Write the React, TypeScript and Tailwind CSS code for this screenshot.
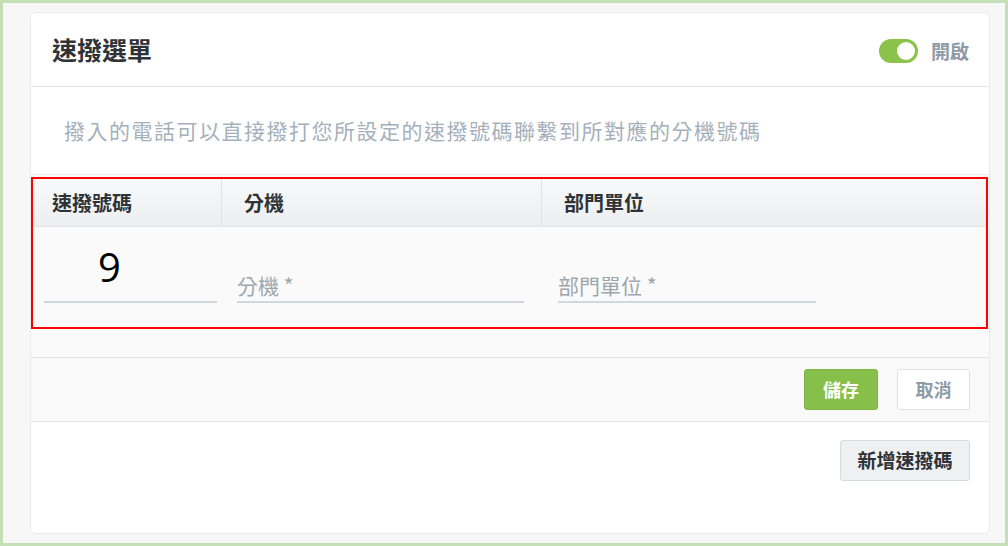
import React from "react";

const cjk = { fontFamily: '"Noto Sans CJK TC", "Noto Sans", sans-serif' };

export default function App() {
  return (
    <div
      className="w-[1008px] h-[546px] border-[3px] border-[#c6e0b5] bg-[#f7f7f7] pt-[9px] pl-[27px]"
      style={cjk}
    >
      <div className="w-[960px] h-[522px] rounded-[6px] border border-[#ebebeb] bg-white overflow-hidden flex flex-col">
        {/* Header */}
        <div className="h-[74px] shrink-0 border-b border-[#e3e3e3] flex items-center justify-between pl-[21px] pr-[20px]">
          <div className="text-[25px] font-bold text-[#2f3336] leading-none">速撥選單</div>
          <div className="flex items-center gap-[13px] pt-[2px]">
            <div className="w-[39px] h-[24px] rounded-full bg-[#8bc34a] flex items-center justify-end pr-[3px]">
              <div className="w-[18px] h-[18px] rounded-full bg-white" />
            </div>
            <div className="text-[19px] font-bold text-[#8d9ba7] leading-none">開啟</div>
          </div>
        </div>

        {/* Description */}
        <div className="h-[88px] shrink-0 border-b border-[#ececec] flex items-center pl-[33px]">
          <div className="text-[21px] tracking-[1.5px] text-[#a5b0ba] leading-none">
            撥入的電話可以直接撥打您所設定的速撥號碼聯繫到所對應的分機號碼
          </div>
        </div>

        {/* Table section */}
        <div className="h-[183px] shrink-0 bg-[#fafafa] border-b border-[#e2e2e2] pt-[2px]">
          <div className="h-[152px] mr-[1px] border-2 border-[#ff0000] flex flex-col">
            <div className="h-[48px] shrink-0 flex border-b border-[#e3e6e8] bg-gradient-to-b from-[#f8f9fa] to-[#eceef0]">
              <div className="w-[189px] shrink-0 flex items-center pl-[19px] border-r border-[#dfe3e6] text-[20px] font-bold text-[#2f3336]">
                速撥號碼
              </div>
              <div className="w-[320px] shrink-0 flex items-center pl-[22px] border-r border-[#dfe3e6] text-[20px] font-bold text-[#2f3336]">
                分機
              </div>
              <div className="flex-1 flex items-center pl-[22px] text-[20px] font-bold text-[#2f3336]">
                部門單位
              </div>
            </div>
            <div className="flex-1 flex items-start pt-[20px]">
              <div className="ml-[11px] w-[173px] h-[56px] flex flex-col justify-between">
                <div
                  className="pl-[54px] text-[40px] leading-none text-black"
                  style={{ fontFamily: '"Open Sans", "Liberation Sans", sans-serif' }}
                >
                  9
                </div>
                <div className="h-[2px] bg-[#cfd8dd]" />
              </div>
              <div className="ml-[20px] w-[287px] h-[56px] flex flex-col justify-end">
                <div className="text-[21px] leading-none text-[#9da6ad] pb-[5px]">分機 *</div>
                <div className="h-[2px] bg-[#cfd8dd]" />
              </div>
              <div className="ml-[34px] w-[258px] h-[56px] flex flex-col justify-end">
                <div className="text-[21px] leading-none text-[#9da6ad] pb-[5px]">部門單位 *</div>
                <div className="h-[2px] bg-[#cfd8dd]" />
              </div>
            </div>
          </div>
        </div>

        {/* Actions */}
        <div className="h-[64px] shrink-0 bg-[#f9f9f9] border-b border-[#e3e3e3] flex items-center justify-end gap-[19px] pr-[19px]">
          <div className="w-[74px] h-[41px] rounded-[3px] bg-[#86c04a] border border-[#7db640] flex items-center justify-center text-[18px] font-bold text-white">
            儲存
          </div>
          <div className="w-[73px] h-[41px] rounded-[3px] bg-white border border-[#dde1e4] flex items-center justify-center text-[18px] font-bold text-[#8d9ba7]">
            取消
          </div>
        </div>

        {/* Bottom */}
        <div className="flex-1 flex justify-end items-start pt-[18px] pr-[19px]">
          <div className="w-[130px] h-[41px] rounded-[3px] bg-[#eef0f2] border border-[#d6dbe0] flex items-center justify-center text-[19px] font-bold text-[#2f3336]">
            新增速撥碼
          </div>
        </div>
      </div>
    </div>
  );
}
